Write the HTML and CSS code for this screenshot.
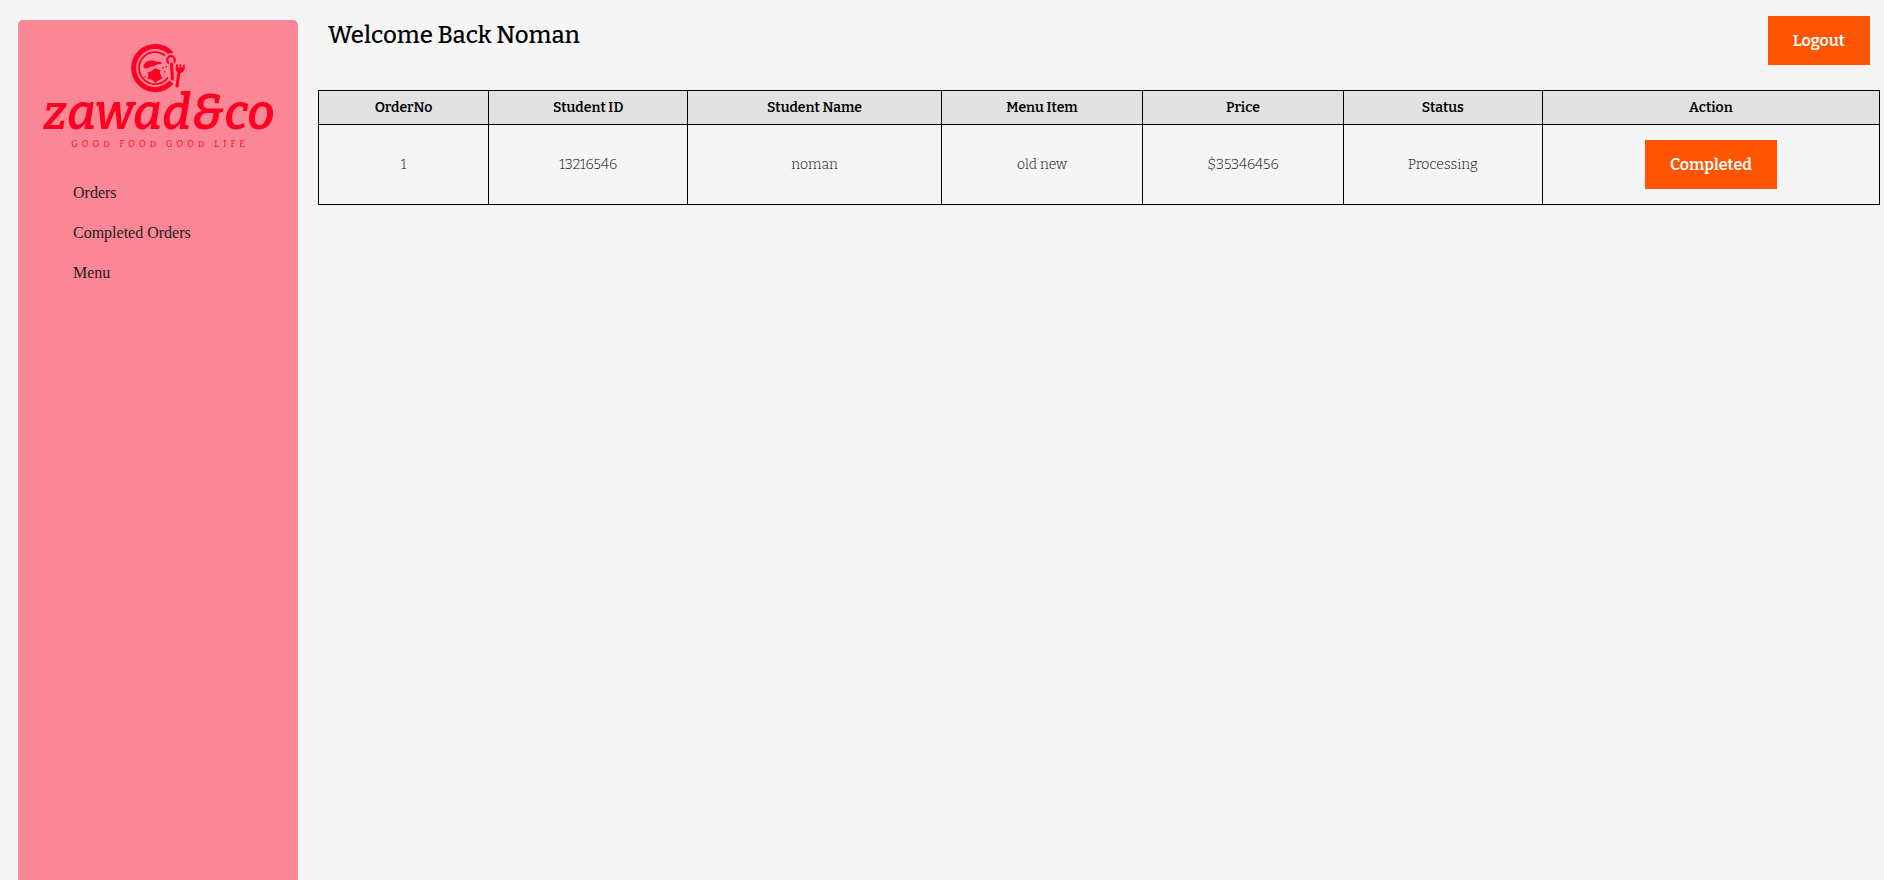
FILE: index.html
```html
<!DOCTYPE html>
<html lang="en">
<head>
<meta charset="utf-8">
<meta name="viewport" content="width=device-width, initial-scale=1">
<title>Zawad&amp;co Orders</title>
<link rel="stylesheet" href="styles.css">
</head>
<body>
<div class="layout">
  <aside class="sidebar">
    <svg class="logo" viewBox="0 0 240 110" role="img" aria-label="zawad&amp;co, good food good life">
      <g fill="none" stroke="currentColor">
        <path d="M133.500 14A21.500 21.500 0 1 0 133.500 42" stroke-width="5"/>
        <path d="M127 15.500A16 16 0 1 0 130 37.500" stroke-width="1.800"/>
        <circle cx="133" cy="20" r="5.800" stroke="#fb8695" stroke-width="2"/>
        <circle cx="133" cy="20" r="3.800" stroke-width="2.200"/>
        <path d="M133.500 24l1 15M141 32l-2 14" stroke="#fb8695" stroke-width="5.500" stroke-linecap="round"/>
        <path d="M133.500 24l1 15" stroke-width="3" stroke-linecap="round"/>
        <path d="M141 32l-2 14" stroke-width="3" stroke-linecap="round"/>
        <path d="M139 25v4M142.500 25v4M146 25.500l-.5 3.500" stroke-width="1.800" stroke-linecap="round"/>
      </g>
      <path fill="currentColor" d="M137.500 27.500h9c0 4-2 5.500-4.500 5.500s-4.500-2-4.500-5.500zM105.500 26c1-4 5-6 9-5.500 3 .5 4 1.500 9 1.500v2c-4 0-5 .5-7 2-3 1-4 0-6 2-3 1-5.500 0-5-2zM117.500 28l5 2.500-.5 3 2.500 5-4.500 2-2.500 2.500-3-3-5-1.500 1-3-1-3 4-1.500z"/>
      <path fill="currentColor" d="M124 27h1.500v1.500H124zM127.500 26h1.500v1.500h-1.500zM126 31h1.500v1.500H126zM106.500 36h1.500v1.500h-1.500z"/>
      <text class="logo-name" x="121" y="89">zawad&amp;co</text>
      <text class="logo-tagline" x="122" y="107">GOOD FOOD GOOD LIFE</text>
    </svg>
    <nav class="menu">
      <a href="#orders">Orders</a>
      <a href="#completed">Completed Orders</a>
      <a href="#menu">Menu</a>
    </nav>
  </aside>
  <main class="content">
    <header class="topbar">
      <h1>Welcome Back Noman</h1>
      <button class="button" type="button">Logout</button>
    </header>
    <table class="orders">
      <colgroup>
        <col class="col-order"><col class="col-id"><col class="col-name"><col class="col-item"><col class="col-price"><col class="col-status"><col class="col-action">
      </colgroup>
      <thead>
        <tr><th>OrderNo</th><th>Student ID</th><th>Student Name</th><th>Menu Item</th><th>Price</th><th>Status</th><th>Action</th></tr>
      </thead>
      <tbody>
        <tr><td>1</td><td>13216546</td><td>noman</td><td>old new</td><td>$35346456</td><td>Processing</td><td><button class="button" type="button">Completed</button></td></tr>
      </tbody>
    </table>
  </main>
</div>
</body>
</html>
```
FILE: styles.css
```css
* { box-sizing: border-box; }
body {
  margin: 0;
  background: #f5f5f5;
  color: #000;
  font-family: Bitter, "DejaVu Serif Condensed", "DejaVu Serif", serif;
}
.layout {
  display: flex;
  gap: 20px;
  min-height: 100vh;
  padding: 0 4px 0 18px;
}
.sidebar {
  flex: 0 0 280px;
  margin-top: 20px;
  padding: 20px;
  background: #fb8695;
  border-radius: 5px 5px 0 0;
}
.logo {
  display: block;
  width: 100%;
  color: #ff0022;
}
.logo-name {
  fill: currentColor;
  font: italic 600 49px Bitter, "Open Sans", sans-serif;
  text-anchor: middle;
}
.logo-tagline {
  fill: currentColor;
  font: 9px Bitter, "DejaVu Serif Condensed", serif;
  letter-spacing: 4px;
  text-anchor: middle;
}
.menu {
  display: flex;
  flex-direction: column;
  gap: 20px;
  padding: 33px 35px;
}
.menu a {
  color: #222;
  font: 16px/20px "Liberation Serif", serif;
  text-decoration: none;
}
.content { flex: 1; }
.topbar {
  display: flex;
  justify-content: space-between;
  align-items: flex-start;
  padding: 16px 10px 25px;
}
h1 {
  margin: 0;
  font-size: 24px;
  line-height: 38px;
  font-weight: 500;
}
.button {
  padding: 14px 25px;
  border: 0;
  background: #ff5500;
  color: #fff;
  font: 600 16px/21px Bitter, "DejaVu Serif Condensed", "DejaVu Serif", serif;
  cursor: pointer;
}
.orders {
  width: 100%;
  table-layout: fixed;
  border-collapse: collapse;
  text-align: center;
}
.orders th, .orders td { border: 1px solid #000; }
.orders th {
  padding: 6px;
  background: #e2e2e2;
  font-size: 14px;
  font-weight: 600;
  line-height: 21px;
}
.orders td {
  padding: 15px 6px;
  color: #000;
  font-size: 14px;
  font-weight: 300;
}
.orders td .button { display: block; margin: 0 auto; }
.col-order { width: 10.9%; }
.col-id { width: 12.75%; }
.col-name { width: 16.25%; }
.col-item { width: 12.9%; }
.col-price { width: 12.85%; }
.col-status { width: 12.75%; }
.col-action { width: 21.6%; }
```
